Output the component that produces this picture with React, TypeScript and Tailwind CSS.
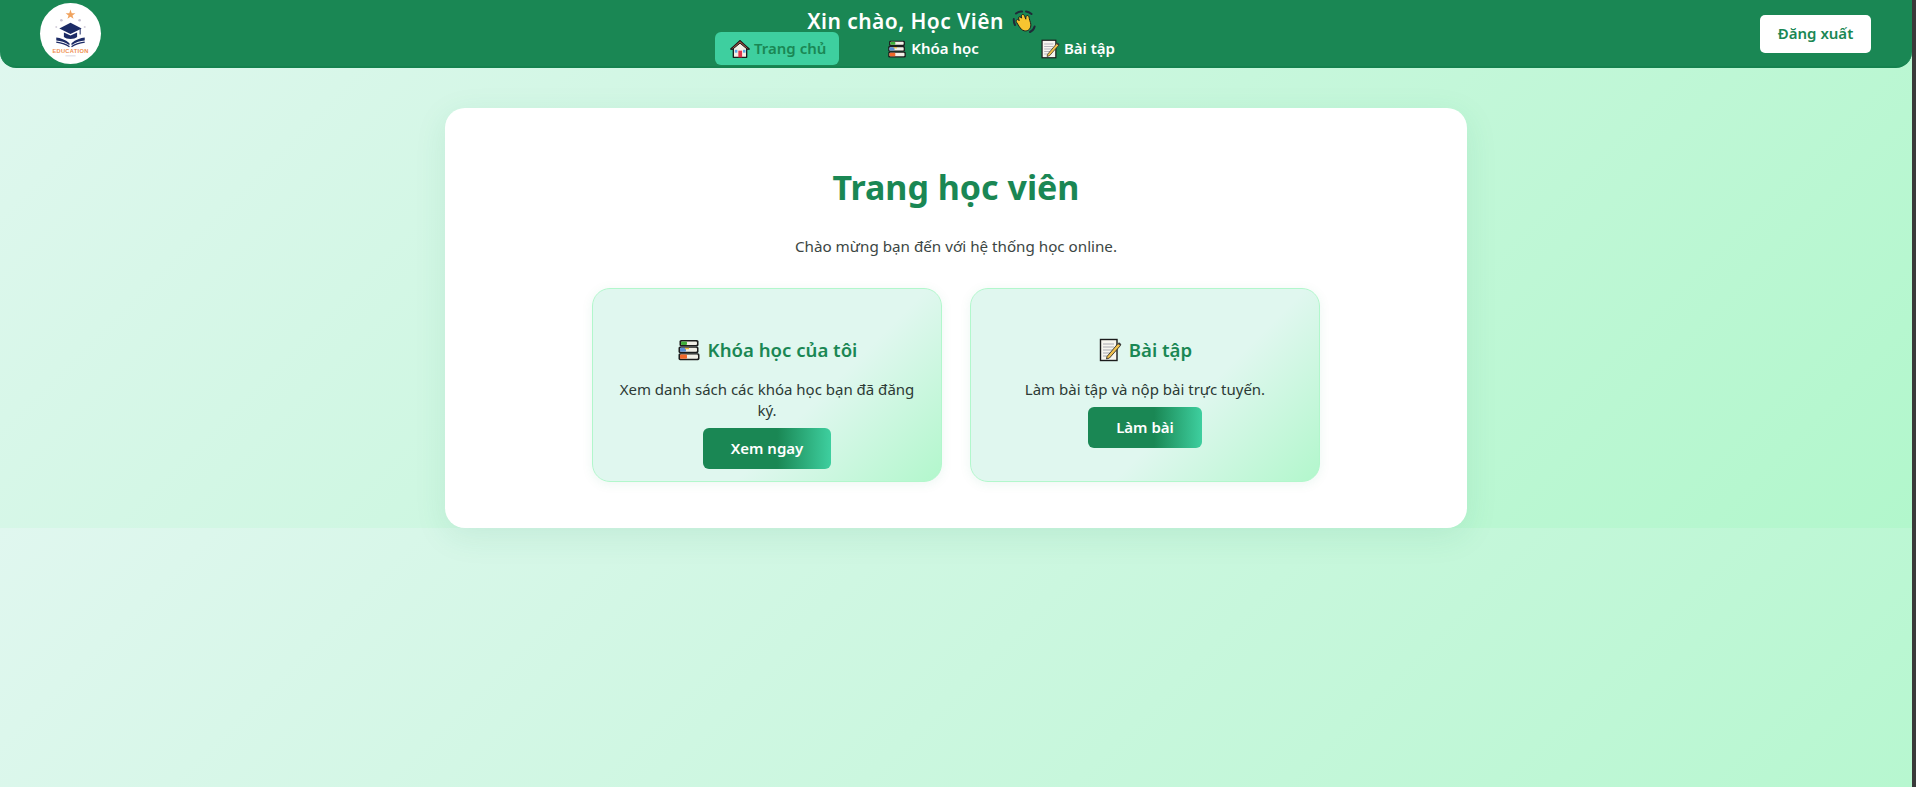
const HouseIcon = () => (
  <svg viewBox="0 0 24 24" className="w-5 h-5 shrink-0">
    <path d="M12 2 L23 12 L20 12 L20 22 L4 22 L4 12 L1 12 Z" fill="#f5efe6" stroke="#1c1c1c" strokeWidth="1.6" strokeLinejoin="round" />
    <path d="M12 2 L23 12 L20.5 12 L12 5 L3.5 12 L1 12 Z" fill="#a5533f" stroke="#1c1c1c" strokeWidth="1.2" strokeLinejoin="round" />
    <rect x="10" y="14" width="4.5" height="8" fill="#e0364c" />
    <rect x="5.8" y="13" width="3" height="3.4" fill="#5aa9e6" />
    <rect x="15.6" y="13" width="3" height="3.4" fill="#5aa9e6" />
  </svg>
)

const BooksIcon = ({ size = "w-5 h-5" }: { size?: string }) => (
  <svg viewBox="0 0 24 24" className={`${size} shrink-0`}>
    <rect x="2.5" y="2" width="19" height="6.4" rx="1.6" fill="#1c1c1c" />
    <rect x="4" y="3.4" width="16" height="3.6" rx="1" fill="#f1efe6" />
    <rect x="4" y="3.4" width="6" height="3.6" rx="1" fill="#3fae3a" />
    <rect x="1.5" y="8.4" width="20" height="6.8" rx="1.6" fill="#1c1c1c" />
    <rect x="3" y="9.8" width="17" height="4" rx="1" fill="#f1efe6" />
    <rect x="3" y="9.8" width="6" height="4" rx="1" fill="#5b8fd6" />
    <rect x="8" y="9.8" width="4" height="1.4" fill="#e8b93a" />
    <rect x="1.5" y="15.2" width="21" height="7" rx="1.6" fill="#1c1c1c" />
    <rect x="3" y="16.6" width="18" height="4.2" rx="1" fill="#f1efe6" />
    <rect x="3" y="16.6" width="7" height="4.2" rx="1" fill="#f0672b" />
  </svg>
)

const MemoIcon = ({ size = "w-5 h-5" }: { size?: string }) => (
  <svg viewBox="0 0 24 24" className={`${size} shrink-0`}>
    <rect x="2.5" y="1.5" width="16.5" height="21" fill="#f7f5ef" stroke="#1c1c1c" strokeWidth="1.4" />
    <path d="M5 6h11M5 9h11M5 12h11M5 15h7M5 18h6" stroke="#a9a9b2" strokeWidth="1" />
    <path d="M9 18.5 L20 5.5 L22.5 7.5 L11.5 20 L8.5 21 Z" fill="#f2c14e" stroke="#1c1c1c" strokeWidth="0.8" strokeLinejoin="round" />
    <path d="M20 5.5 L22.5 7.5 L23.4 6.2 L21 4.2 Z" fill="#3b3b3b" />
  </svg>
)

const WaveIcon = () => (
  <svg viewBox="0 0 24 24" className="w-6 h-6 shrink-0">
    <path d="M4 3.5 C6 1.8 8 1.4 10 1.6 M18 22 C20.5 20.8 22 19 22.6 16.5 M1.8 9 C1.6 11 2 13 3 15 M14 1.5 C16 1.6 18 2.6 19.5 4" fill="none" stroke="#1f2a38" strokeWidth="2" strokeLinecap="round" />
    <path d="M6.5 7.5 C7.4 6.4 8.8 6.9 9.4 8 L9.6 8.2 C9.2 6.4 9 5 10.3 4.5 C11.5 4.1 12.2 5 12.7 6.4 L13.8 9.2 C13.8 7.2 13.9 5.6 15.3 5.5 C16.7 5.4 17 6.8 17.3 8.5 C17.8 11.5 19.2 13.4 18.8 16 C18.2 19.6 15.4 21.4 12.4 20.8 C9.8 20.3 8.6 18.6 7.2 16.4 L4.5 12.2 C3.8 11 4.2 10 5.1 9.7 C5.9 9.4 6.6 9.9 7.2 10.7 Z" fill="#f7c531" stroke="#1c1c1c" strokeWidth="1" strokeLinejoin="round" />
  </svg>
)

const Logo = () => (
  <div className="w-[61px] h-[61px] rounded-full bg-white shrink-0">
    <svg viewBox="0 0 60 60" className="w-full h-full">
      <path d="M30 6.5 L31.2 10 L34.8 10 L31.9 12.2 L33 15.6 L30 13.5 L27 15.6 L28.1 12.2 L25.2 10 L28.8 10 Z" fill="#f0a35e" />
      <circle cx="21" cy="17" r="1.3" fill="#c9c4d4" />
      <circle cx="39" cy="17" r="1.3" fill="#c9c4d4" />
      <circle cx="44" cy="23.5" r="1" fill="#d5d0dc" />
      <circle cx="16" cy="23.5" r="1" fill="#d5d0dc" />
      <path d="M30 19.5 L41 25 L30 30.5 L19 25 Z" fill="#1c2b66" />
      <path d="M23.5 29 L23.5 33.5 C26 36 34 36 36.5 33.5 L36.5 29 L30 32 Z" fill="#1c2b66" />
      <path d="M39.5 25.5 L39.5 31" stroke="#1c2b66" strokeWidth="1" />
      <path d="M16 34 C20 34.5 25 36 29 39.5 L29 41.5 C25 38.5 20 37.5 16 37 Z M44 34 C40 34.5 35 36 31 39.5 L31 41.5 C35 38.5 40 37.5 44 37 Z" fill="#1c2b66" />
      <path d="M16 38.5 C20 39 25 40 29 43 M44 38.5 C40 39 35 40 31 43" stroke="#1c2b66" strokeWidth="1.2" fill="none" />
      <text x="30" y="49" textAnchor="middle" fontSize="5.6" fontWeight="700" fontFamily="'Liberation Sans', sans-serif" fill="#ef8f4f" letterSpacing="0.3">EDUCATION</text>
      <rect x="25" y="51.5" width="10" height="1" fill="#d9d6de" />
    </svg>
  </div>
)

const NavItem = ({ icon, label, active }: { icon: React.ReactNode; label: string; active?: boolean }) => (
  <a className={`h-[33px] flex items-center gap-1 pl-[15px] pr-[13px] rounded-md text-[15px] font-semibold ${active ? "bg-[#3ecf9f] text-[#1a8754]" : "text-white"}`}>
    {icon}
    <span>{label}</span>
  </a>
)

const FeatureCard = ({ icon, title, text, action }: { icon: React.ReactNode; title: string; text: string; action: string }) => (
  <div className="w-[350px] h-[194px] rounded-[18px] border border-[#b2f7cc] bg-[linear-gradient(135deg,#e0f7ef_62%,#b2f7cc)] shadow-[0_2px_12px_rgba(26,135,84,0.08)] px-5 pt-[46px] flex flex-col items-center text-center">
    <h3 className="flex items-center gap-[7px] text-[18.6px] leading-[30px] font-semibold text-[#1a8754]">
      {icon}
      {title}
    </h3>
    <p className="mt-[14px] text-[15px] leading-[21px] text-[#2c3a35]">{text}</p>
    <button className="mt-[7px] h-[41px] px-7 rounded-md text-white text-[15px] font-semibold bg-[linear-gradient(90deg,#1a8754_58%,#3ecf9f)]">
      {action}
    </button>
  </div>
)

export default function App() {
  return (
    <div className="flex min-h-screen font-['Noto_Sans','Open_Sans',sans-serif]">
      <div className="flex-1 min-w-0 bg-[linear-gradient(135deg,#e0f7ef,#b2f7cc)] bg-[length:100%_528px]">
        <header className="h-[68px] flex items-center pl-10 pr-[41px] bg-[#1a8754] border-b-2 border-[#15824f] rounded-b-[16px]">
          <Logo />
          <div className="flex-1 self-stretch flex flex-col items-center pt-[11px]">
            <div className="flex items-center gap-[8px] h-[21px] text-[21px] font-semibold text-white tracking-[0.45px]">
              Xin chào, Học Viên
              <WaveIcon />
            </div>
            <nav className="flex gap-[33px]">
              <NavItem icon={<HouseIcon />} label="Trang chủ" active />
              <NavItem icon={<BooksIcon />} label="Khóa học" />
              <NavItem icon={<MemoIcon />} label="Bài tập" />
            </nav>
          </div>
          <button className="ml-[18px] mt-px w-[111px] h-[38px] rounded-[5px] bg-white text-[#1a8754] text-[15px] font-semibold">
            Đăng xuất
          </button>
        </header>

        <main className="flex justify-center pt-10">
          <section className="w-[1022px] h-[420px] rounded-[20px] bg-white shadow-[0_8px_32px_rgba(26,135,84,0.1)] flex flex-col items-center pt-[52px]">
            <h1 className="text-[34px] leading-[54px] font-bold text-[#1a8754]">Trang học viên</h1>
            <p className="mt-5 text-[15.2px] leading-[24px] text-[#3c4643]">Chào mừng bạn đến với hệ thống học online.</p>
            <div className="mt-[30px] flex gap-[28px]">
              <FeatureCard icon={<BooksIcon size="w-6 h-6" />} title="Khóa học của tôi" text="Xem danh sách các khóa học bạn đã đăng ký." action="Xem ngay" />
              <FeatureCard icon={<MemoIcon size="w-6 h-6" />} title="Bài tập" text="Làm bài tập và nộp bài trực tuyến." action="Làm bài" />
            </div>
          </section>
        </main>
      </div>
      <div className="w-1 shrink-0 bg-[#3a3a3a]" />
    </div>
  )
}
